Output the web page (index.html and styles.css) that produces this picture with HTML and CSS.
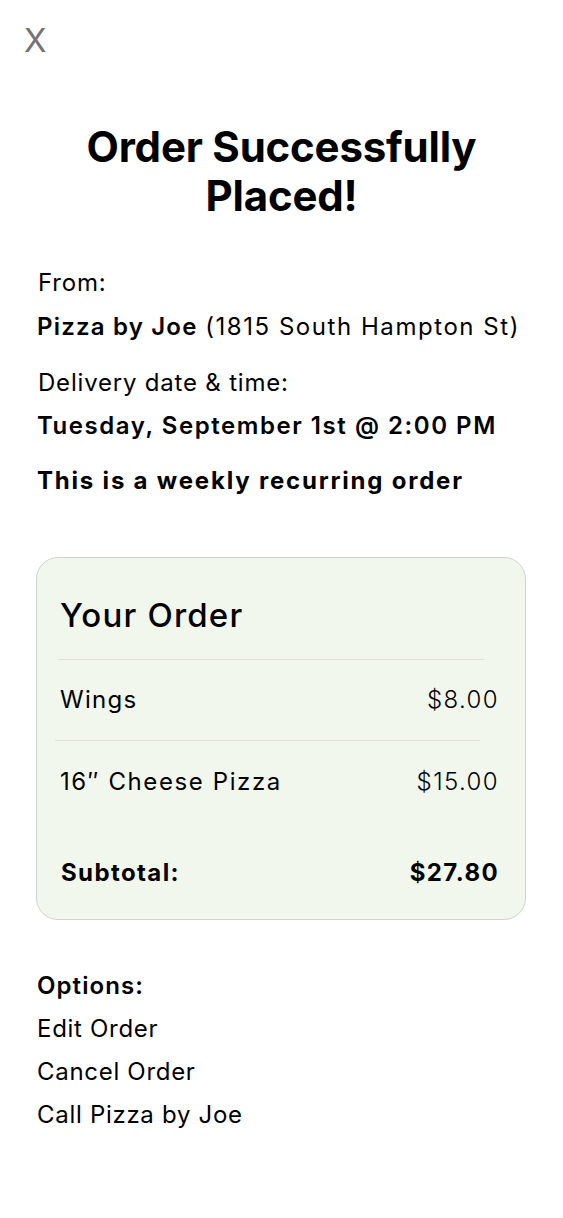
FILE: index.html
```html
<!DOCTYPE html>
<html lang="en">
<head>
<meta charset="utf-8">
<title>Order Successfully Placed</title>
<link rel="stylesheet" href="styles.css">
</head>
<body>
<div class="screen">
  <div class="topbar"><span class="close">X</span></div>
  <h1 class="title">Order Successfully<br>Placed!</h1>
  <div class="info">
    <div class="label">From:</div>
    <div class="value"><b>Pizza by Joe</b> <span class="addr">(1815 South Hampton St)</span></div>
    <div class="label label-2">Delivery date &amp; time:</div>
    <div class="value strong">Tuesday, September 1st @ 2:00 PM</div>
    <div class="recurring">This is a weekly recurring order</div>
  </div>
  <div class="card">
    <div class="card-title">Your Order</div>
    <div class="sep sep-1"></div>
    <div class="row"><span>Wings</span><span class="price">$8.00</span></div>
    <div class="sep sep-2"></div>
    <div class="row"><span class="item-wide">16″ Cheese Pizza</span><span class="price">$15.00</span></div>
    <div class="row total"><span>Subtotal:</span><span>$27.80</span></div>
  </div>
  <div class="options">
    <div class="opt-title">Options:</div>
    <div class="opt">Edit Order</div>
    <div class="opt">Cancel Order</div>
    <div class="opt">Call Pizza by Joe</div>
  </div>
</div>
</body>
</html>
```
FILE: styles.css
```css
* { box-sizing: border-box; }
html, body { margin: 0; padding: 0; background: #fff; }
body {
  font-family: Inter, "Noto Sans", sans-serif;
  color: #000;
  width: 563px;
}
.topbar { height: 60px; padding: 20px 0 0 24px; line-height: 40px; }
.close {
  font-size: 33px;
  font-weight: 400;
  color: #747474;
  line-height: 40px;
}
.title {
  margin: 62px 0 0 0;
  text-align: center;
  font-size: 42px;
  font-weight: 700;
  line-height: 49px;
  letter-spacing: -0.2px;
}
.info {
  padding: 48px 0 0 37px;
  font-size: 24px;
  line-height: 30px;
  letter-spacing: 0.8px;
}
.label { padding-left: 1px; }
.value { margin-top: 14px; }
.label-2 { margin-top: 26px; }
.value b { font-weight: 600; letter-spacing: 1.2px; }
.addr { letter-spacing: 1.55px; }
.value.strong { font-weight: 600; letter-spacing: 1.55px; margin-top: 13px; }
.recurring { font-weight: 700; margin-top: 25px; letter-spacing: 1.8px; }
.card {
  margin: 61px 37px 0 36px;
  background: #f2f7ee;
  border: 1px solid #d2d2d2;
  border-radius: 22px;
  padding: 37px 26px 31px 23px;
}
.card-title {
  font-size: 33px;
  font-weight: 500;
  line-height: 40px;
  letter-spacing: 1.2px;
}
.sep { height: 1px; background: #e0e0e0; }
.sep-1 { margin: 24px 15px 0 -2px; }
.sep-2 { margin: 25px 19px 0 -5px; }
.row {
  display: flex;
  justify-content: space-between;
  font-size: 24px;
  line-height: 30px;
  letter-spacing: 1.3px;
  margin-top: 25px;
}
.sep-2 + .row { margin-top: 26px; }
.item-wide { letter-spacing: 1.6px; }
.price { font-weight: 300; letter-spacing: 1.4px; }
.row.total {
  font-weight: 700;
  margin-top: 61px;
  padding-left: 1px;
  letter-spacing: 1.4px;
}
.options {
  padding: 51px 0 0 37px;
  font-size: 24px;
  line-height: 30px;
  letter-spacing: 0.7px;
}
.opt-title { font-weight: 600; letter-spacing: 1.1px; }
.opt { margin-top: 13px; }
```
